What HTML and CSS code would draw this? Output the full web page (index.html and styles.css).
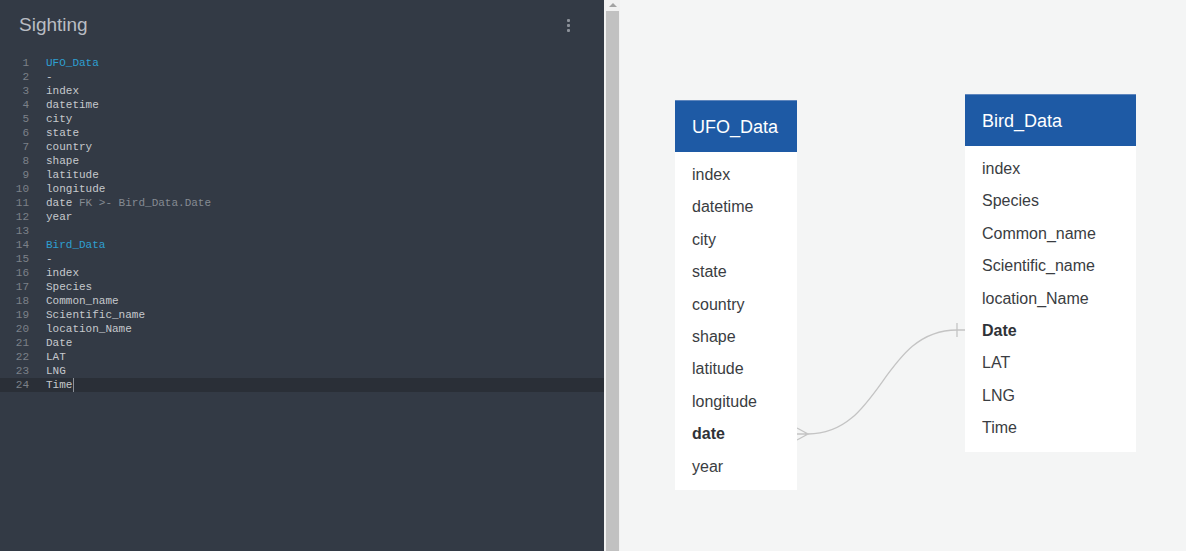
FILE: index.html
```html
<!DOCTYPE html>
<html>
<head>
<meta charset="utf-8">
<link rel="stylesheet" href="styles.css">
</head>
<body>
<div class="app">
  <section class="editor">
    <header class="ed-head">
      <h1 class="title">Sighting</h1>
      <span class="kebab"><i></i><i></i><i></i></span>
    </header>
    <div class="code">
      <div class="line"><span class="ln">1</span><span class="tx tbl">UFO_Data</span></div>
      <div class="line"><span class="ln">2</span><span class="tx">-</span></div>
      <div class="line"><span class="ln">3</span><span class="tx">index</span></div>
      <div class="line"><span class="ln">4</span><span class="tx">datetime</span></div>
      <div class="line"><span class="ln">5</span><span class="tx">city</span></div>
      <div class="line"><span class="ln">6</span><span class="tx">state</span></div>
      <div class="line"><span class="ln">7</span><span class="tx">country</span></div>
      <div class="line"><span class="ln">8</span><span class="tx">shape</span></div>
      <div class="line"><span class="ln">9</span><span class="tx">latitude</span></div>
      <div class="line"><span class="ln">10</span><span class="tx">longitude</span></div>
      <div class="line"><span class="ln">11</span><span class="tx">date <span class="ref">FK &gt;- Bird_Data.Date</span></span></div>
      <div class="line"><span class="ln">12</span><span class="tx">year</span></div>
      <div class="line"><span class="ln">13</span><span class="tx"></span></div>
      <div class="line"><span class="ln">14</span><span class="tx tbl">Bird_Data</span></div>
      <div class="line"><span class="ln">15</span><span class="tx">-</span></div>
      <div class="line"><span class="ln">16</span><span class="tx">index</span></div>
      <div class="line"><span class="ln">17</span><span class="tx">Species</span></div>
      <div class="line"><span class="ln">18</span><span class="tx">Common_name</span></div>
      <div class="line"><span class="ln">19</span><span class="tx">Scientific_name</span></div>
      <div class="line"><span class="ln">20</span><span class="tx">location_Name</span></div>
      <div class="line"><span class="ln">21</span><span class="tx">Date</span></div>
      <div class="line"><span class="ln">22</span><span class="tx">LAT</span></div>
      <div class="line"><span class="ln">23</span><span class="tx">LNG</span></div>
      <div class="line active"><span class="ln">24</span><span class="tx">Time<span class="cursor"></span></span></div>
    </div>
  </section>
  <div class="gutter">
    <div class="sb-arrow"><span class="tri"></span></div>
    <div class="sb-thumb"></div>
  </div>
  <main class="canvas">
    <svg class="links" width="566" height="551" viewBox="0 0 566 551">
      <g fill="none" stroke="#c4c4c4" stroke-width="1.3">
        <path d="M188 434 C 262 434 262 330 337 330 H345"/>
        <path d="M177 428 L188 434 L177 440 M177 434 H188"/>
        <path d="M337 323 V337"/>
      </g>
    </svg>
    <div class="table ufo">
      <div class="t-head">UFO_Data</div>
      <ul class="t-body">
        <li>index</li><li>datetime</li><li>city</li><li>state</li><li>country</li>
        <li>shape</li><li>latitude</li><li>longitude</li><li class="key">date</li><li>year</li>
      </ul>
    </div>
    <div class="table bird">
      <div class="t-head">Bird_Data</div>
      <ul class="t-body">
        <li>index</li><li>Species</li><li>Common_name</li><li>Scientific_name</li><li>location_Name</li>
        <li class="key">Date</li><li>LAT</li><li>LNG</li><li>Time</li>
      </ul>
    </div>
  </main>
</div>
</body>
</html>
```

FILE: styles.css
```css
* { box-sizing: border-box; }
html, body { margin: 0; padding: 0; }
body {
  width: 1186px;
  height: 551px;
  overflow: hidden;
  font-family: "Liberation Sans", Arial, sans-serif;
}
.app {
  display: flex;
  height: 551px;
}
.editor {
  width: 604px;
  flex: none;
  background: #333a45;
  display: flex;
  flex-direction: column;
}
.ed-head {
  height: 56px;
  display: flex;
  align-items: flex-start;
  justify-content: space-between;
  padding: 14px 34px 0 19px;
}
.title {
  margin: 0;
  font-weight: normal;
  font-size: 19px;
  line-height: 22px;
  color: #b9bdc3;
}
.kebab {
  display: flex;
  flex-direction: column;
  gap: 2px;
  padding-top: 5px;
}
.kebab i {
  display: block;
  width: 3px;
  height: 3px;
  border-radius: 1px;
  background: #8b9098;
}
.code {
  font-family: "Liberation Mono", "DejaVu Sans Mono", monospace;
  font-size: 11px;
}
.line {
  display: flex;
  height: 14px;
  line-height: 14px;
}
.line.active { background: #2a2f37; }
.ln {
  width: 29px;
  text-align: right;
  color: #7c8189;
  flex: none;
}
.tx {
  margin-left: 17px;
  color: #c6c9cd;
  white-space: pre;
  display: flex;
  align-items: center;
}
.tbl { color: #2e9fd1; }
.ref { color: #858b93; }
.cursor {
  display: inline-block;
  width: 1px;
  height: 14px;
  background: #8b9098;
  margin-left: 1px;
}
.gutter {
  width: 16px;
  flex: none;
  background: #f1f1f1;
  display: flex;
  flex-direction: column;
  padding-left: 2px;
  padding-right: 1px;
}
.sb-arrow {
  height: 11px;
  display: flex;
  justify-content: center;
  padding-top: 3px;
}
.tri {
  width: 0;
  height: 0;
  border-left: 4px solid transparent;
  border-right: 4px solid transparent;
  border-bottom: 4px solid #a3a3a3;
}
.sb-thumb {
  flex: 1;
  background: #c1c1c1;
}
.canvas {
  flex: 1;
  position: relative;
  background: #f4f5f5;
}
.links {
  position: absolute;
  left: 0;
  top: 0;
}
.table {
  position: absolute;
  background: #fff;
}
.ufo { left: 55px; top: 100px; width: 122px; }
.bird { left: 345px; top: 94px; width: 171px; }
.t-head {
  height: 52px;
  background: #1e5aa5;
  border-top: 1px solid #5f86bd;
  color: #fff;
  font-size: 18px;
  line-height: 53px;
  padding-left: 17px;
}
.t-body {
  list-style: none;
  margin: 0;
  padding: 7px 0 7px 17px;
}
.t-body li {
  height: 32.4px;
  line-height: 32.4px;
  font-size: 16px;
  color: #3a3d42;
}
.t-body li.key { font-weight: bold; color: #2f3237; }
```
